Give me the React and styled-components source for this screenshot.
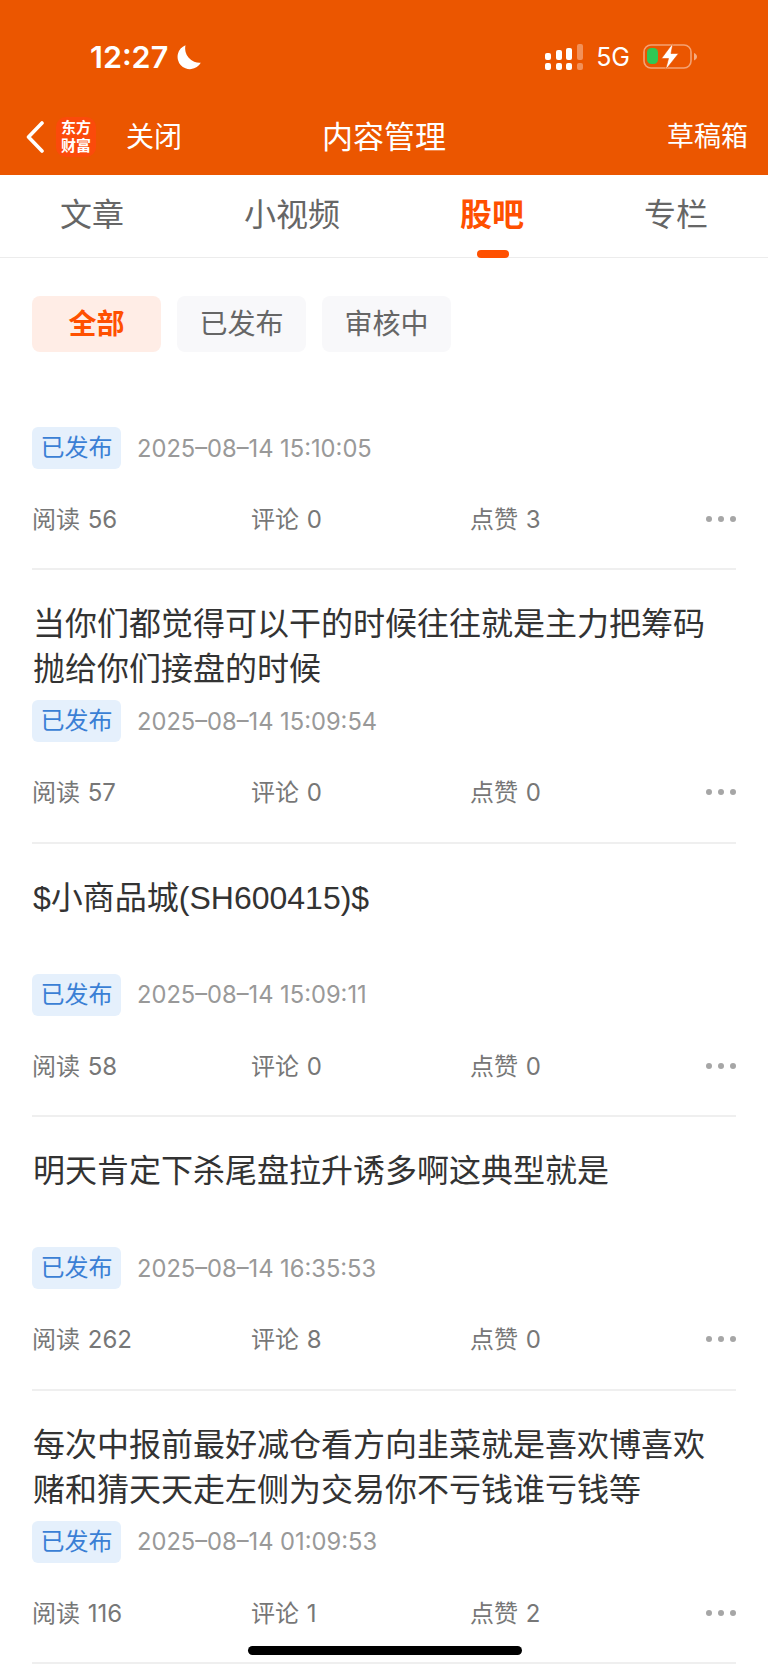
import React from 'react';
import styled, { createGlobalStyle } from 'styled-components';

const GlobalStyle = createGlobalStyle`
  html, body {
    margin: 0;
    padding: 0;
    background: #fff;
  }
  body {
    font-family: Inter, "Noto Sans CJK SC", "Noto Sans", sans-serif;
  }
`;

const Page = styled.div`
  position: relative;
  width: 768px;
  height: 1669px;
  overflow: hidden;
  background: #fff;
`;

const Header = styled.header`
  background: #eb5600;
  color: #fff;
  height: 175px;
`;

const StatusBar = styled.div`
  height: 98px;
  display: flex;
  align-items: center;
  padding: 16px 71px 0 90px;
  box-sizing: border-box;
  justify-content: space-between;
`;

const StatusGroup = styled.div`
  display: flex;
  align-items: center;
`;

const Time = styled.span`
  font-size: 30.5px;
  font-weight: 600;
  line-height: 36px;
  margin-right: 8px;
`;

const Network = styled.span`
  font-size: 25px;
  line-height: 30px;
  margin: 0 13px 0 13px;
`;

const NavRow = styled.div`
  position: relative;
  height: 77px;
  display: flex;
  align-items: center;
  padding: 0 20px 0 26px;
`;

const BackIcon = styled.svg`
  width: 18px;
  height: 32px;
  flex: none;
`;

const Logo = styled.div`
  width: 40px;
  height: 40px;
  margin-left: 12px;
  border-radius: 10px;
  background: #fb4a0b;
  font-size: 15px;
  font-weight: 700;
  line-height: 18px;
  letter-spacing: 0;
  text-align: center;
  display: flex;
  flex-direction: column;
  justify-content: center;
  flex: none;
`;

const CloseText = styled.span`
  font-size: 28px;
  margin-left: 30px;
  margin-bottom: 4px;
`;

const NavTitle = styled.h1`
  position: absolute;
  left: 0;
  right: 0;
  margin: 0 0 4px;
  text-align: center;
  font-size: 31px;
  font-weight: 400;
  pointer-events: none;
`;

const DraftText = styled.span`
  font-size: 27px;
  margin-left: auto;
  margin-bottom: 4px;
`;

const TabBar = styled.nav`
  height: 83px;
  box-sizing: border-box;
  border-bottom: 1px solid #ececec;
  display: flex;
  justify-content: space-between;
  padding: 0 60px;
`;

const Tab = styled.div`
  position: relative;
  font-size: 32px;
  line-height: 80px;
  color: ${p => (p.$active ? '#ff5000' : '#666')};
  font-weight: ${p => (p.$active ? 600 : 400)};

  ${p => p.$active && `
    &::after {
      content: '';
      position: absolute;
      left: 17px;
      bottom: -1px;
      width: 32px;
      height: 8px;
      border-radius: 4px;
      background: #ff5000;
    }
  `}
`;

const Filters = styled.div`
  display: flex;
  gap: 16px;
  padding: 38px 32px 45px;
`;

const FilterButton = styled.div`
  width: 129px;
  height: 56px;
  border-radius: 8px;
  text-align: center;
  line-height: 56px;
  font-size: 28px;
  background: ${p => (p.$active ? '#ffede6' : '#f8f8fa')};
  color: ${p => (p.$active ? '#ff5000' : '#666')};
  font-weight: ${p => (p.$active ? 600 : 400)};
`;

const Item = styled.article`
  margin: 0 32px;
  padding: 30px 0 29.4px;
  border-bottom: 2px solid #efefef;
`;

const Title = styled.div`
  font-family: "Liberation Sans", "Noto Sans CJK SC", sans-serif;
  font-size: 32px;
  line-height: 45px;
  height: 88px;
  max-width: 690px;
  padding: 2px 0 0 1px;
  margin-bottom: 10px;
  color: #333;
`;

const MetaRow = styled.div`
  display: flex;
  align-items: center;
  height: 42px;
`;

const StatusTag = styled.span`
  width: 89px;
  height: 42px;
  border-radius: 6px;
  background: #e5f0fc;
  color: #3a7fd5;
  font-size: 24px;
  line-height: 42px;
  text-align: center;
`;

const DateText = styled.span`
  margin-left: 16px;
  font-size: 23.7px;
  color: #999;
`;

const StatsRow = styled.div`
  display: flex;
  align-items: center;
  height: 40px;
  margin-top: 30px;
  color: #777;
  font-size: 24px;
  word-spacing: 1px;
`;

const Stat = styled.span`
  width: 219px;
  flex: none;
  margin-bottom: 3px;
`;

const More = styled.div`
  display: flex;
  gap: 6px;
  margin-left: auto;
`;

const Dot = styled.i`
  width: 6px;
  height: 6px;
  border-radius: 50%;
  background: #a6a6a6;
`;

const HomeIndicator = styled.div`
  position: absolute;
  left: 248px;
  top: 1646px;
  width: 274px;
  height: 9px;
  border-radius: 5px;
  background: #000;
`;

const items = [
  { title: '', date: '2025–08–14 15:10:05', read: 56, comment: 0, like: 3 },
  { title: '当你们都觉得可以干的时候往往就是主力把筹码抛给你们接盘的时候', date: '2025–08–14 15:09:54', read: 57, comment: 0, like: 0 },
  { title: '$小商品城(SH600415)$', date: '2025–08–14 15:09:11', read: 58, comment: 0, like: 0 },
  { title: '明天肯定下杀尾盘拉升诱多啊这典型就是', date: '2025–08–14 16:35:53', read: 262, comment: 8, like: 0 },
  { title: '每次中报前最好减仓看方向韭菜就是喜欢博喜欢赌和猜天天走左侧为交易你不亏钱谁亏钱等', date: '2025–08–14 01:09:53', read: 116, comment: 1, like: 2 },
];

const tabs = ['文章', '小视频', '股吧', '专栏'];
const filters = ['全部', '已发布', '审核中'];

function Signal() {
  return (
    <svg width="38" height="28" viewBox="0 0 38 28" fill="#fff">
      <rect x="0" y="10" width="6" height="7" rx="2" />
      <rect x="0" y="20" width="6" height="7" rx="2" />
      <rect x="11" y="7" width="6" height="10" rx="2" />
      <rect x="11" y="20" width="6" height="7" rx="2" />
      <rect x="21" y="5" width="6" height="12" rx="2" />
      <rect x="21" y="20" width="6" height="7" rx="2" />
      <rect x="32" y="1" width="6" height="16" rx="2" opacity="0.35" />
      <rect x="32" y="20" width="6" height="7" rx="2" opacity="0.35" />
    </svg>
  );
}

function Battery() {
  return (
    <svg width="54" height="28" viewBox="0 0 54 28">
      <rect x="1" y="2" width="47" height="23" rx="7" fill="none" stroke="#fff" strokeOpacity="0.45" strokeWidth="1.6" />
      <path d="M51 10c1.6.6 3 2 3 3.7s-1.4 3-3 3.7z" fill="#fff" fillOpacity="0.5" />
      <rect x="4" y="5" width="11" height="16" rx="4.5" fill="#30c854" />
      <path d="M30 0 18.5 15.5h7L22.5 27 35.5 10.5H28z" fill="#fff" stroke="#eb5600" strokeWidth="0.6" />
    </svg>
  );
}

export default function App() {
  return (
    <Page>
      <GlobalStyle />
      <Header>
        <StatusBar>
          <StatusGroup>
            <Time>12:27</Time>
            <svg width="25" height="25" viewBox="0 0 25 25" fill="#fff">
              <path d="M9.5.2A12.4 12.4 0 1 0 24.8 17.8 14.5 14.5 0 0 1 9.5.2z" />
            </svg>
          </StatusGroup>
          <StatusGroup>
            <Signal />
            <Network>5G</Network>
            <Battery />
          </StatusGroup>
        </StatusBar>
        <NavRow>
          <BackIcon viewBox="0 0 18 32" fill="none" stroke="#fff" strokeWidth="3.6" strokeLinecap="round" strokeLinejoin="round">
            <path d="M16 2 2.5 16 16 30" />
          </BackIcon>
          <Logo>
            <span>东方</span>
            <span>财富</span>
          </Logo>
          <CloseText>关闭</CloseText>
          <NavTitle>内容管理</NavTitle>
          <DraftText>草稿箱</DraftText>
        </NavRow>
      </Header>
      <TabBar>
        {tabs.map(t => (
          <Tab key={t} $active={t === '股吧'}>{t}</Tab>
        ))}
      </TabBar>
      <Filters>
        {filters.map(f => (
          <FilterButton key={f} $active={f === '全部'}>{f}</FilterButton>
        ))}
      </Filters>
      {items.map(item => (
        <Item key={item.date}>
          {item.title && <Title>{item.title}</Title>}
          <MetaRow>
            <StatusTag>已发布</StatusTag>
            <DateText>{item.date}</DateText>
          </MetaRow>
          <StatsRow>
            <Stat>阅读 {item.read}</Stat>
            <Stat>评论 {item.comment}</Stat>
            <Stat>点赞 {item.like}</Stat>
            <More>
              <Dot />
              <Dot />
              <Dot />
            </More>
          </StatsRow>
        </Item>
      ))}
      <HomeIndicator />
    </Page>
  );
}
